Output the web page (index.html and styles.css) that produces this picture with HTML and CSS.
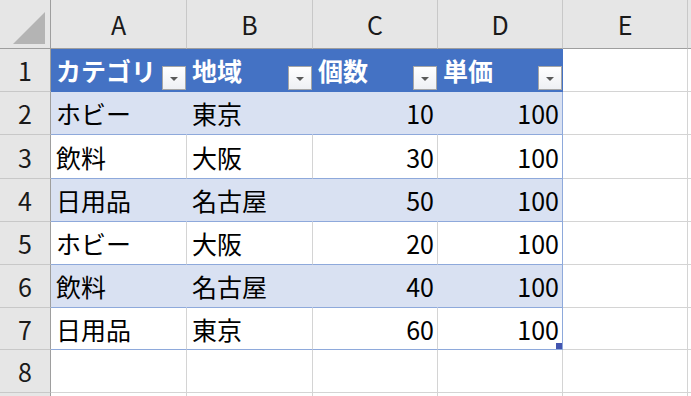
FILE: index.html
```html
<!DOCTYPE html>
<html lang="ja">
<head>
<meta charset="utf-8">
<title>Sheet</title>
<link rel="stylesheet" href="styles.css">
</head>
<body>
<div class="sheet">
  <div class="corner"><svg class="corner-tri" width="36" height="36" viewBox="0 0 36 36"><polygon points="2,34 34,2 34,34" fill="#b4b4b4"/></svg></div>
  <div class="colhead">A</div>
  <div class="colhead">B</div>
  <div class="colhead">C</div>
  <div class="colhead">D</div>
  <div class="colhead">E</div>
  <div class="colhead rest"></div>

  <div class="rowhead">1</div>
  <div class="cell th">カテゴリ<span class="filter"></span></div>
  <div class="cell th">地域<span class="filter"></span></div>
  <div class="cell th">個数<span class="filter"></span></div>
  <div class="cell th last">単価<span class="filter"></span></div>
  <div class="cell"></div>
  <div class="cell rest"></div>

  <div class="rowhead">2</div>
  <div class="cell band">ホビー</div>
  <div class="cell band">東京</div>
  <div class="cell band num">10</div>
  <div class="cell band num last">100</div>
  <div class="cell"></div>
  <div class="cell rest"></div>

  <div class="rowhead">3</div>
  <div class="cell plain">飲料</div>
  <div class="cell plain">大阪</div>
  <div class="cell plain num">30</div>
  <div class="cell plain num last">100</div>
  <div class="cell"></div>
  <div class="cell rest"></div>

  <div class="rowhead">4</div>
  <div class="cell band">日用品</div>
  <div class="cell band">名古屋</div>
  <div class="cell band num">50</div>
  <div class="cell band num last">100</div>
  <div class="cell"></div>
  <div class="cell rest"></div>

  <div class="rowhead">5</div>
  <div class="cell plain">ホビー</div>
  <div class="cell plain">大阪</div>
  <div class="cell plain num">20</div>
  <div class="cell plain num last">100</div>
  <div class="cell"></div>
  <div class="cell rest"></div>

  <div class="rowhead">6</div>
  <div class="cell band">飲料</div>
  <div class="cell band">名古屋</div>
  <div class="cell band num">40</div>
  <div class="cell band num last">100</div>
  <div class="cell"></div>
  <div class="cell rest"></div>

  <div class="rowhead">7</div>
  <div class="cell plain">日用品</div>
  <div class="cell plain">東京</div>
  <div class="cell plain num">60</div>
  <div class="cell plain num last">100<span class="handle"></span></div>
  <div class="cell"></div>
  <div class="cell rest"></div>

  <div class="rowhead">8</div>
  <div class="cell"></div>
  <div class="cell"></div>
  <div class="cell"></div>
  <div class="cell"></div>
  <div class="cell"></div>
  <div class="cell rest"></div>

  <div class="rowhead"></div>
  <div class="cell"></div>
  <div class="cell"></div>
  <div class="cell"></div>
  <div class="cell"></div>
  <div class="cell"></div>
  <div class="cell rest"></div>
</div>
</body>
</html>
```

FILE: styles.css
```css
html, body {
  margin: 0;
  padding: 0;
  background: #ffffff;
}

body {
  width: 691px;
  height: 396px;
  overflow: hidden;
  font-family: "Noto Sans CJK JP", "Noto Sans", sans-serif;
  font-size: 25px;
  color: #000000;
}

.sheet {
  display: grid;
  grid-template-columns: 51px 136px 126px 125px 125px 125px 1fr;
  grid-template-rows: 49px 43px 43px 44px 43px 43px 43px 42px 43px 20px;
  width: 691px;
}

.sheet > div {
  box-sizing: border-box;
  position: relative;
  display: flex;
  align-items: center;
  white-space: nowrap;
  overflow: visible;
}

.corner {
  background: #e6e6e6;
  border-right: 1px solid #9e9e9e;
  border-bottom: 1px solid #9e9e9e;
}

.corner-tri {
  position: absolute;
  left: 11px;
  top: 10px;
}

.colhead {
  background: #e6e6e6;
  justify-content: center;
  border-right: 1px solid #c8c8c8;
  border-bottom: 1px solid #9e9e9e;
  color: #1a1a1a;
}

.rowhead {
  background: #e6e6e6;
  justify-content: center;
  border-right: 1px solid #9e9e9e;
  border-bottom: 1px solid #c8c8c8;
  color: #1a1a1a;
}

.cell {
  padding: 0 3px 0 5px;
  border-right: 1px solid #d4d4d4;
  border-bottom: 1px solid #d4d4d4;
}

.rest {
  border-right: none;
}

.cell.th {
  background: #4472c4;
  color: #ffffff;
  font-weight: 700;
  border-right-color: #4472c4;
  border-bottom-color: #4472c4;
}

.cell.band {
  background: #d9e1f2;
  border-right-color: #d9e1f2;
  border-bottom-color: #8ea9db;
}

.cell.plain {
  border-bottom-color: #8ea9db;
}

.cell.last {
  border-right-color: #8ea9db;
}

.cell.th.last {
  border-right-color: #4472c4;
}

.num {
  justify-content: flex-end;
}

.filter {
  position: absolute;
  right: 0;
  bottom: 1px;
  width: 24px;
  height: 24px;
  box-sizing: border-box;
  border: 1px solid #a6a6a6;
  background: linear-gradient(#ffffff, #eef0f4);
}

.filter::after {
  content: "";
  position: absolute;
  left: 7px;
  top: 10px;
  border-left: 4px solid transparent;
  border-right: 4px solid transparent;
  border-top: 4px solid #5a5a5a;
}

.handle {
  position: absolute;
  right: 0;
  bottom: 0;
  width: 6px;
  height: 6px;
  background: #4355b0;
}
```
